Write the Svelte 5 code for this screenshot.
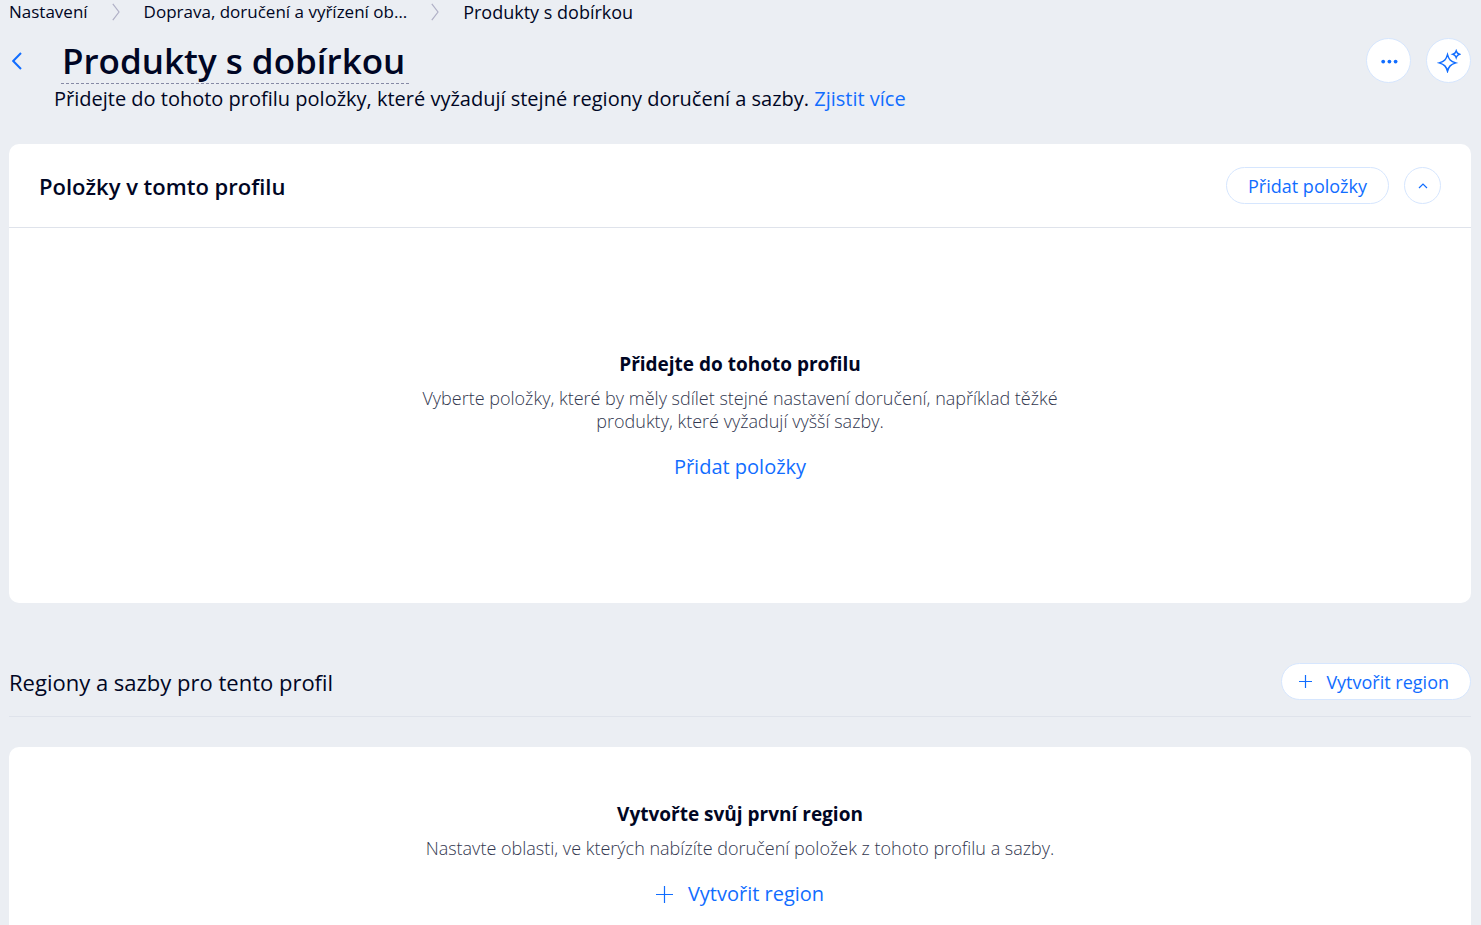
<script>
	const crumbs = [
		{ label: 'Nastavení', href: '#nastaveni' },
		{ label: 'Doprava, doručení a vyřízení ob…', href: '#doprava' }
	];

	let expanded = $state(true);
</script>

<main>
	<nav>
		{#each crumbs as crumb}
			<a class="crumb" href={crumb.href}>{crumb.label}</a>
			<svg class="separator" width="8" height="18" viewBox="0 0 8 18">
				<path d="M0.8 0.8 L7 9 L0.8 17.2" />
			</svg>
		{/each}
		<span class="crumb current">Produkty s dobírkou</span>
	</nav>

	<header class="page-header">
		<button class="back" aria-label="Zpět">
			<svg width="10" height="18" viewBox="0 0 10 18">
				<path d="M9 1 L1.2 9 L9 17" />
			</svg>
		</button>
		<h1>Produkty s dobírkou</h1>
		<div class="tools">
			<button class="round" aria-label="Další akce">
				<svg class="filled" width="18" height="6" viewBox="0 0 18 6">
					<circle cx="3.2" cy="3.6" r="1.9" />
					<circle cx="9.4" cy="3.6" r="1.9" />
					<circle cx="15.6" cy="3.6" r="1.9" />
				</svg>
			</button>
			<button class="round" aria-label="Asistent">
				<svg class="sparkle" width="24" height="24" viewBox="0 0 24 24">
					<path d="M10.5 5.6 C11.9 10.4 13.4 12.2 18.8 13.9 C13.4 15.6 11.9 17.4 10.5 22.2 C9.1 17.4 7.6 15.6 2.2 13.9 C7.6 12.2 9.1 10.4 10.5 5.6 Z" />
					<path d="M19.2 2 C19.9 4.1 20.4 4.6 22.5 5.3 C20.4 6 19.9 6.5 19.2 8.6 C18.5 6.5 18 6 15.9 5.3 C18 4.6 18.5 4.1 19.2 2 Z" />
				</svg>
			</button>
		</div>
	</header>
	<p class="subtitle">
		Přidejte do tohoto profilu položky, které vyžadují stejné regiony doručení a sazby.
		<a href="#vice">Zjistit více</a>
	</p>

	<section class="card items">
		<div class="card-header">
			<h2>Položky v tomto profilu</h2>
			<button class="pill">Přidat položky</button>
			<button class="round small" aria-label="Sbalit" aria-expanded={expanded} onclick={() => (expanded = !expanded)}>
				<svg class:flipped={!expanded} width="10" height="6" viewBox="0 0 10 6">
					<path d="M1 5 L5 1 L9 5" />
				</svg>
			</button>
		</div>
		{#if expanded}
			<div class="empty">
				<h3>Přidejte do tohoto profilu</h3>
				<p>Vyberte položky, které by měly sdílet stejné nastavení doručení, například těžké<br />produkty, které vyžadují vyšší sazby.</p>
				<button class="text-button">Přidat položky</button>
			</div>
		{/if}
	</section>

	<div class="section-header">
		<h2>Regiony a sazby pro tento profil</h2>
		<button class="pill with-icon">
			<svg width="13" height="13" viewBox="0 0 13 13">
				<path d="M6.5 0 V13 M0 6.5 H13" />
			</svg>
			Vytvořit region
		</button>
	</div>

	<section class="card regions">
		<div class="empty">
			<h3>Vytvořte svůj první region</h3>
			<p>Nastavte oblasti, ve kterých nabízíte doručení položek z tohoto profilu a sazby.</p>
			<button class="text-button">
				<svg width="17" height="17" viewBox="0 0 17 17">
					<path d="M8.5 0 V17 M0 8.5 H17" />
				</svg>
				Vytvořit region
			</button>
		</div>
	</section>
</main>

<style>
	:global(body) {
		background: #ebeef3;
	}

	main {
		--text: #000624;
		--blue: #116dff;
		--outline: #d6e6fe;

		box-sizing: border-box;
		padding: 0 10px 0 9px;
		color: var(--text);
		font-family: "Open Sans", "Noto Sans", sans-serif;
		font-size: 18px;
	}

	h1, h2, h3, p {
		margin: 0;
	}

	a {
		color: var(--blue);
		text-decoration: none;
	}

	button {
		display: flex;
		align-items: center;
		justify-content: center;
		padding: 0;
		border: none;
		background: none;
		color: var(--blue);
		font: inherit;
		cursor: pointer;
	}

	svg {
		flex: none;
		fill: none;
		stroke: var(--blue);
		stroke-width: 1.2;
	}

	nav {
		display: flex;
		align-items: center;
		height: 24px;
	}

	.crumb {
		color: var(--text);
		font-size: 17px;
		line-height: 24px;
		white-space: nowrap;
	}

	.current {
		font-size: 18px;
	}

	.separator {
		margin: 0 24px;
		stroke: #b0b0c6;
	}

	.page-header {
		display: flex;
		align-items: flex-start;
		height: 46px;
		margin-top: 14px;
	}

	.back {
		align-self: center;
		width: 16px;
		height: 30px;
		margin-right: 36px;
	}

	.back svg {
		stroke-width: 2;
	}

	h1 {
		padding: 0 4px 0 1px;
		border-bottom: 1px dashed #868aa5;
		font-size: 35px;
		font-weight: 600;
		line-height: 45px;
	}

	.tools {
		display: flex;
		gap: 15px;
		margin-left: auto;
	}

	.round {
		box-sizing: border-box;
		width: 45px;
		height: 45px;
		border: 1px solid var(--outline);
		border-radius: 50%;
		background: #fff;
	}

	.small {
		width: 37px;
		height: 37px;
	}

	.filled {
		fill: var(--blue);
		stroke: none;
	}

	.sparkle {
		stroke-width: 1.5;
	}

	.flipped {
		transform: rotate(180deg);
	}

	.subtitle {
		padding-left: 45px;
		font-size: 20px;
		line-height: 30px;
	}

	.card {
		border-radius: 10px;
		background: #fff;
	}

	.items {
		margin-top: 30px;
	}

	.card-header {
		display: flex;
		align-items: center;
		gap: 15px;
		height: 83px;
		padding: 0 30px;
		border-bottom: 1px solid #dfe3eb;
	}

	h2 {
		margin-right: auto;
		font-size: 22px;
		font-weight: 600;
		line-height: 30px;
	}

	.section-header h2 {
		font-weight: 400;
	}

	.pill {
		box-sizing: border-box;
		height: 37px;
		padding: 0 21px;
		border: 1px solid var(--outline);
		border-radius: 19px;
		background: #fff;
		font-size: 18px;
	}

	.with-icon {
		gap: 14px;
		padding-left: 17px;
	}

	.empty {
		display: flex;
		flex-direction: column;
		align-items: center;
		text-align: center;
	}

	.items .empty {
		padding: 121px 20px;
	}

	.regions .empty {
		padding: 52px 20px 120px;
	}

	h3 {
		font-size: 19px;
		font-weight: 700;
		line-height: 30px;
	}

	.empty p {
		margin-top: 8px;
		color: #32374f;
		font-size: 18px;
		font-weight: 300;
		line-height: 23px;
	}

	.text-button {
		gap: 15px;
		margin-top: 19px;
		font-size: 20px;
		line-height: 30px;
	}

	.section-header {
		display: flex;
		align-items: center;
		padding: 60px 0 16px;
		border-bottom: 1px solid #dfe3eb;
		margin-bottom: 30px;
	}
</style>
